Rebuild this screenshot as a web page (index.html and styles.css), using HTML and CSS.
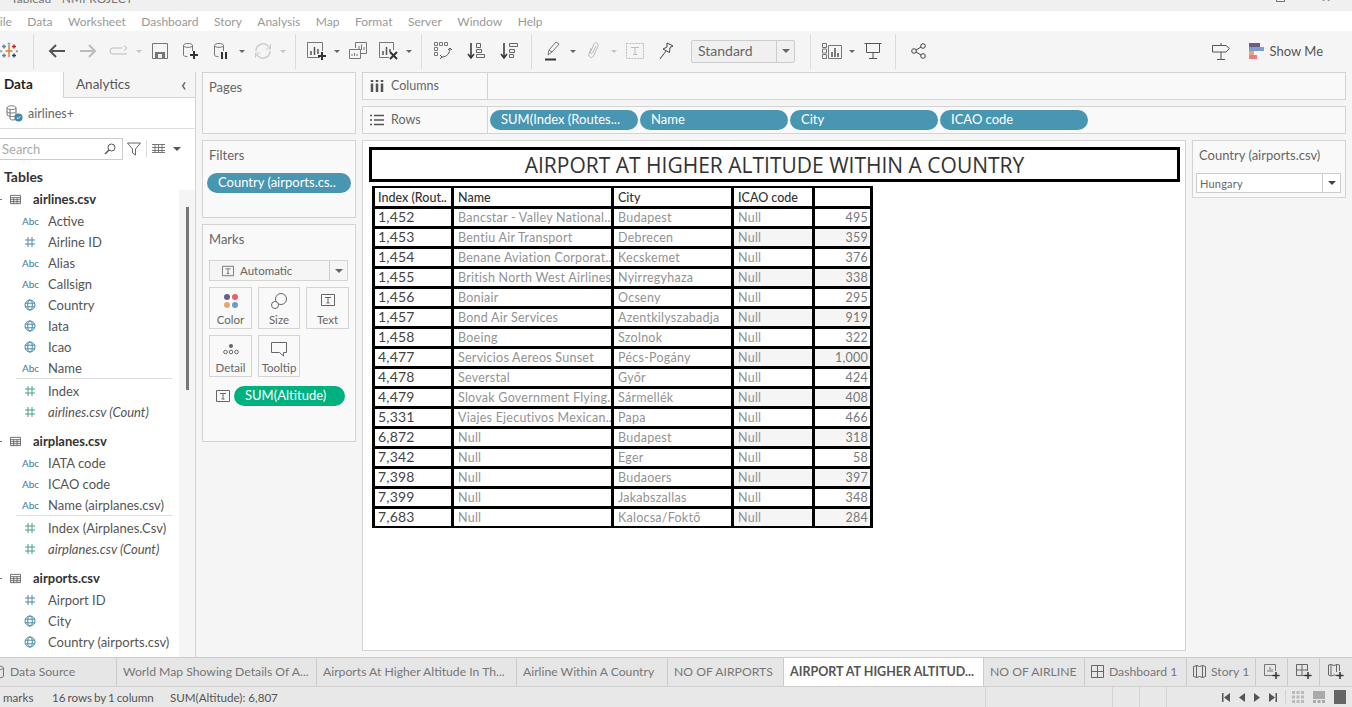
FILE: index.html
```html
<!DOCTYPE html>
<html>

<head>
    <meta charset="utf-8">
    <title>Tableau - NMPROJECT</title>
    <link rel="stylesheet" href="styles.css">
</head>

<body>
    <svg class="sprite">
        <symbol id="hash" viewBox="0 0 12 12"><path d="M4 1v10M8 1v10M1 4h10M1 8h10" fill="none" stroke="currentColor" /></symbol>
        <symbol id="globe" viewBox="0 0 12 12"><g fill="none" stroke="currentColor"><circle cx="6" cy="6" r="5" /><ellipse cx="6" cy="6" rx="2.3" ry="5" /><path d="M1 4.2h10M1 7.8h10" /></g></symbol>
        <symbol id="tbl" viewBox="0 0 12 12"><path d="M.5 1.5h11v9H.5zM.5 4h11M.5 6.2h11M.5 8.4h11M4 4v6.5M7.7 4v6.5" fill="none" stroke="#666" /></symbol>
        <symbol id="tbox" viewBox="0 0 14 14"><path d="M.5 1.5h13v11H.5z" fill="none" stroke="#666" /><path d="M4 4.5h6M7 4.5v5.5M5.5 10h3" fill="none" stroke="#666" /></symbol>
    </svg>

    <div class="titlebar">
        <span class="titlebar-text">Tableau - NMPROJECT</span>
        <span class="win-btn win-max"></span>
        <span class="win-x">&#10005;</span>
    </div>

    <div class="menubar">
        <span>File</span><span>Data</span><span>Worksheet</span><span>Dashboard</span><span>Story</span><span>Analysis</span><span>Map</span><span>Format</span><span>Server</span><span>Window</span><span>Help</span>
    </div>

    <div class="toolbar">
        <span class="tool logo">
            <svg width="18" height="18" viewBox="0 0 18 18" fill="none" stroke-width="1.4">
                <path d="M9 3v12M5.5 9h7" stroke="#e8762b" />
                <path d="M4 2.5v4M2 4.5h4" stroke="#5b879b" />
                <path d="M14 2.5v4M12 4.5h4" stroke="#c72035" />
                <path d="M4 11.5v4M2 13.500h4" stroke="#59879b" />
                <path d="M14 11.500v4M12 13.500h4" stroke="#1f447e" />
                <path d="M9 .5v2.500M7.700 1.700h2.600M1 8v2.500M.2 9.200h2M17 8v2.500M15.800 9.200h2" stroke="#7099a6" stroke-width="1" />
            </svg>
        </span>
        <span class="sep sep-first"></span>
        <div class="tools tools-first">
            <span class="tool"><svg width="20" height="16" viewBox="0 0 20 16"><path d="M18 8H3M9 2 3 8l6 6" fill="none" stroke="#555" stroke-width="2" /></svg></span>
            <span class="tool"><svg width="20" height="16" viewBox="0 0 20 16"><path d="M2 8h15M11 2l6 6-6 6" fill="none" stroke="#bbb" stroke-width="2" /></svg></span>
            <span class="tool"><svg width="20" height="12" viewBox="0 0 20 12"><path d="M13 3H4a2.500 2.500 0 0 0 0 6h14M15 .5 18 3l-3 2.500" fill="none" stroke="#bbb" /></svg></span>
            <span class="caret off"></span>
            <span class="tool"><svg width="16" height="16" viewBox="0 0 16 16"><path d="M.5.5h15v15H.5z" fill="none" stroke="#777" /><path d="M3 9h10v6H3z" fill="#777" /><path d="M6 11h4v4H6z" fill="#eee" /></svg></span>
            <span class="tool"><svg width="18" height="18" viewBox="0 0 18 18"><path d="M1.500 3.500C1.500 .8 10.500 .8 10.500 3.500V9M1.500 3.500c0 2.500 9 2.500 9 0M1.500 3.500V13c0 1 1.500 1.500 4 1.700" fill="none" stroke="#777" /><path d="M12 9v8M8 13h8" stroke="#333" stroke-width="2" /></svg></span>
            <span class="tool"><svg width="18" height="18" viewBox="0 0 18 18"><path d="M1.500 3.500C1.500 .8 10.500 .8 10.500 3.500V9M1.500 3.500c0 2.500 9 2.500 9 0M1.500 3.500V13c0 1 1.500 1.500 4 1.700" fill="none" stroke="#777" /><path d="M9 10v7M13 10v7" stroke="#333" stroke-width="2" /></svg></span>
            <span class="caret"></span>
            <span class="tool"><svg width="18" height="18" viewBox="0 0 18 18"><path d="M2 9a7 7 0 0 1 12-5l2 2M16 9a7 7 0 0 1-12 5l-2-2" fill="none" stroke="#ccc" stroke-width="1.500" /><path d="M16.500 2v5h-5M1.500 16v-5h5" fill="none" stroke="#ccc" /></svg></span>
            <span class="caret off"></span>
        </div>
        <span class="sep"></span>
        <div class="tools">
            <span class="tool"><svg width="20" height="18" viewBox="0 0 20 18"><path d="M13 15.500H.5V.5h15V9" fill="none" stroke="#777" /><path d="M4 9v4M7.500 5v8M11 7v5" stroke="#555" stroke-width="1.500" /><path d="M15 10v8M11 14h8" stroke="#333" stroke-width="2" /></svg></span>
            <span class="caret"></span>
            <span class="tool"><svg width="18" height="18" viewBox="0 0 18 18"><path d="M6.500 6V.5h11v11H12M.5 7.500h11v9H.5z" fill="none" stroke="#777" /><path d="M10 8V4M12.500 8V2.500M15 8V5M3 14v-2M5.500 14v-3M8 14v-2" stroke="#777" /></svg></span>
            <span class="tool"><svg width="20" height="18" viewBox="0 0 20 18"><path d="M10 15.500H.5V.5h14V8" fill="none" stroke="#777" /><path d="M4 9v4M7.500 5v8M11 7v3" stroke="#555" stroke-width="1.500" /><path d="m11 10 7 7M18 10l-7 7" stroke="#333" stroke-width="2" /></svg></span>
            <span class="caret"></span>
        </div>
        <span class="sep"></span>
        <div class="tools tools-spaced">
            <span class="tool"><svg width="18" height="18" viewBox="0 0 18 18"><path d="M.5.5h3v3h-3zM5.500.5h3v3h-3zM10.500.5h3v3h-3zM.5 5.500h3v3h-3zM.5 10.500h3v3h-3z" fill="none" stroke="#777" /><path d="M16 6c0 5-3 9-8 9M6 13l2 2-2 2M14 8l2-2 2 2" fill="none" stroke="#555" /></svg></span>
            <span class="tool"><svg width="18" height="18" viewBox="0 0 18 18"><path d="M4 1v14M1 12l3 4 3-4" fill="none" stroke="#333" stroke-width="1.500" /><path d="M9.500 1.500h4v4h-4zM9.500 7.500h5v3h-5zM9.500 12.500h8v3h-8z" fill="none" stroke="#666" /></svg></span>
            <span class="tool"><svg width="18" height="18" viewBox="0 0 18 18"><path d="M4 1v14M1 12l3 4 3-4" fill="none" stroke="#333" stroke-width="1.500" /><path d="M9.500 1.500h8v3h-8zM9.500 7.500h5v3h-5zM9.500 12.500h4v3h-4z" fill="none" stroke="#666" /></svg></span>
        </div>
        <span class="sep"></span>
        <div class="tools">
            <span class="tool"><svg width="18" height="20" viewBox="0 0 18 20"><path d="M4 14 5 9l7-8 3 2-7 8z M5 9l3 2" fill="none" stroke="#777" /><path d="M1 18.500h11" stroke="#333" stroke-width="2" /></svg></span>
            <span class="caret"></span>
            <span class="tool"><svg width="14" height="18" viewBox="0 0 14 18"><path d="M4 6 2 12c-1 3 3 5 4.500 2L11 4c1-3-3-4-4-2L3.500 10c-.5 1.500 1.500 2 2 1L9 4" fill="none" stroke="#bbb" /></svg></span>
            <span class="caret off"></span>
            <span class="tool"><svg width="18" height="16" viewBox="0 0 18 16"><path d="M.5.5h17v15H.5z" fill="none" stroke="#bbb" stroke-dasharray="2 1" /><path d="M5 4.500h8M9 4.500v7M7 11.500h4" fill="none" stroke="#bbb" /></svg></span>
            <span class="tool"><svg width="16" height="18" viewBox="0 0 16 18"><path d="m9 1 6 3-3 1.500-.5 5-6.500-3.500 4-2zM8 9l-6 8" fill="none" stroke="#444" /></svg></span>
        </div>
        <div class="fit-select"><span class="fit-label">Standard</span><span class="select-arrow"></span></div>
        <span class="sep"></span>
        <div class="tools">
            <span class="tool"><svg width="20" height="16" viewBox="0 0 20 16"><path d="M.5.5h4v4h-4zM.5 6h4v4h-4zM.5 11.500h4v4h-4zM6.500 2.500h13v13h-13z" fill="none" stroke="#777" /><path d="M10 14V9M13 14V5M16 14v-4" stroke="#555" stroke-width="1.500" /></svg></span>
            <span class="caret"></span>
            <span class="tool"><svg width="18" height="18" viewBox="0 0 18 18"><path d="M.5 1.500h17M2.500 1.500v9h13v-9M9 10.500v6M5 16.500h8" fill="none" stroke="#555" /></svg></span>
        </div>
        <span class="sep"></span>
        <div class="tools tools-last">
            <span class="tool"><svg width="16" height="16" viewBox="0 0 16 16"><g fill="none" stroke="#444"><circle cx="3" cy="8" r="2.300" /><circle cx="12" cy="3" r="2.300" /><circle cx="12" cy="13" r="2.300" /><path d="m5 7 5-3M5 9l5 3" /></g></svg></span>
        </div>
        <div class="toolbar-right">
            <span class="tool"><svg width="18" height="18" viewBox="0 0 18 18"><path d="M9 1v2M9 10v7M5 17.500h8M.5 3.500H14l3.500 3-3.500 3.500H.5z" fill="none" stroke="#555" /></svg></span>
            <span class="showme-bars"><i class="bar-a"></i><i class="bar-b"></i><i class="bar-c"></i><i class="bar-d"></i></span>
            <span class="showme-text">Show Me</span>
        </div>
    </div>

    <div class="main">
        <div class="data-pane">
            <div class="pane-tabs">
                <span class="pane-tab active">Data</span>
                <span class="pane-tab">Analytics</span>
                <span class="chevron">&#8249;</span>
            </div>
            <div class="source">
                <svg width="18" height="18" viewBox="0 0 18 18"><path d="M2 4c0-3 9-3 9 0v7c0 2-6 2-9 0zM2 4c0 2 9 2 9 0M2 7.500c0 2 9 2 9 0M5 6v9c2 1.500 4 1 5 .5" fill="none" stroke="#777" /><circle cx="13.500" cy="13.500" r="4" fill="#3f86a8" /><path d="m11.800 13.500 1.200 1.200 2.200-2.400" fill="none" stroke="#fff" /></svg>
                <span>airlines+</span>
            </div>
            <div class="search-row">
                <div class="search"><span>Search</span>
                    <svg width="12" height="12" viewBox="0 0 12 12"><circle cx="7.500" cy="4.500" r="3.500" fill="none" stroke="#555" /><path d="M5 7 1 11" stroke="#555" stroke-width="1.500" /></svg>
                </div>
                <svg class="search-filter" width="14" height="14" viewBox="0 0 14 14"><path d="M.5 1h13L8.500 7v6l-3-2V7z" fill="none" stroke="#666" /></svg>
                <span class="search-sep"></span>
                <svg width="13" height="9" viewBox="0 0 13 9"><path d="M0 .5h13M0 3.500h13M0 6.500h13M0 8.500h13M3 0v9M6.500 0v9M10 0v9" stroke="#777" fill="none" /></svg>
                <span class="caret dark"></span>
            </div>
            <div class="tables-head">Tables</div>
            <div class="tree">
                <div class="tree-list">
                    <div class="group first"><span class="twist"></span><svg class="tbl-icon"><use href="#tbl" /></svg>airlines.csv</div>
                    <div class="field"><span class="abc">Abc</span>Active</div>
                    <div class="field"><svg class="ficon dim"><use href="#hash" /></svg>Airline ID</div>
                    <div class="field"><span class="abc">Abc</span>Alias</div>
                    <div class="field"><span class="abc">Abc</span>Callsign</div>
                    <div class="field"><svg class="ficon dim"><use href="#globe" /></svg>Country</div>
                    <div class="field"><svg class="ficon dim"><use href="#globe" /></svg>Iata</div>
                    <div class="field"><svg class="ficon dim"><use href="#globe" /></svg>Icao</div>
                    <div class="field"><span class="abc">Abc</span>Name</div>
                    <div class="field-sep"></div>
                    <div class="field"><svg class="ficon mes"><use href="#hash" /></svg>Index</div>
                    <div class="field italic"><svg class="ficon mes"><use href="#hash" /></svg>airlines.csv (Count)</div>

                    <div class="group"><span class="twist"></span><svg class="tbl-icon"><use href="#tbl" /></svg>airplanes.csv</div>
                    <div class="field"><span class="abc">Abc</span>IATA code</div>
                    <div class="field"><span class="abc">Abc</span>ICAO code</div>
                    <div class="field"><span class="abc">Abc</span>Name (airplanes.csv)</div>
                    <div class="field-sep"></div>
                    <div class="field"><svg class="ficon mes"><use href="#hash" /></svg>Index (Airplanes.Csv)</div>
                    <div class="field italic"><svg class="ficon mes"><use href="#hash" /></svg>airplanes.csv (Count)</div>

                    <div class="group"><span class="twist"></span><svg class="tbl-icon"><use href="#tbl" /></svg>airports.csv</div>
                    <div class="field"><svg class="ficon dim"><use href="#hash" /></svg>Airport ID</div>
                    <div class="field"><svg class="ficon dim"><use href="#globe" /></svg>City</div>
                    <div class="field"><svg class="ficon dim"><use href="#globe" /></svg>Country (airports.csv)</div>
                </div>
                <div class="scroll"><div class="scroll-thumb"></div></div>
            </div>
        </div>

        <div class="cards">
            <div class="card card-pages"><div class="card-title">Pages</div></div>
            <div class="card card-filters">
                <div class="card-title">Filters</div>
                <div class="pill filter-pill">Country (airports.cs..</div>
            </div>
            <div class="card card-marks">
                <div class="card-title">Marks</div>
                <div class="mark-select">
                    <svg width="12" height="12"><use href="#tbox" /></svg>
                    <span class="mark-select-text">Automatic</span>
                    <span class="select-arrow"></span>
                </div>
                <div class="mark-grid">
                    <div class="mark-btn">
                        <svg width="16" height="16" viewBox="0 0 16 16"><circle cx="4" cy="4" r="3" fill="#6d5c8f" /><circle cx="12" cy="4" r="3" fill="#e9616f" /><circle cx="4" cy="12" r="3" fill="#e8a56f" /><circle cx="12" cy="12" r="3" fill="#6f9cc2" /></svg>
                        Color
                    </div>
                    <div class="mark-btn">
                        <svg width="16" height="16" viewBox="0 0 16 16"><circle cx="10" cy="6" r="5.500" fill="none" stroke="#666" /><circle cx="4" cy="12" r="3.500" fill="#fff" stroke="#666" /></svg>
                        Size
                    </div>
                    <div class="mark-btn">
                        <svg width="14" height="14"><use href="#tbox" /></svg>
                        Text
                    </div>
                    <div class="mark-btn">
                        <svg width="16" height="16" viewBox="0 0 16 16"><circle cx="8" cy="5" r="2" fill="#666" /><g fill="none" stroke="#666"><circle cx="2.500" cy="11" r="1.800" /><circle cx="8" cy="11" r="1.800" /><circle cx="13.500" cy="11" r="1.800" /></g></svg>
                        Detail
                    </div>
                    <div class="mark-btn">
                        <svg width="16" height="16" viewBox="0 0 16 16"><path d="M.5 1.500h15v10h-3V15l-4-3.500H.5z" fill="none" stroke="#666" /></svg>
                        Tooltip
                    </div>
                </div>
                <div class="mark-pill-row">
                    <svg width="14" height="14"><use href="#tbox" /></svg>
                    <div class="pill pill-green">SUM(Altitude)</div>
                </div>
            </div>
        </div>

        <div class="work">
            <div class="shelf">
                <div class="shelf-label">
                    <svg width="14" height="12" viewBox="0 0 14 12"><path d="M2 3.500v8.500M7 3.500v8.500M12 3.500v8.500M2 0v2M7 0v2M12 0v2" stroke="#555" stroke-width="2.500" /></svg>
                    Columns
                </div>
                <div class="shelf-body"></div>
            </div>
            <div class="shelf">
                <div class="shelf-label">
                    <svg width="14" height="12" viewBox="0 0 14 12"><path d="M0 1.500h2M4 1.500h10M0 6h2M4 6h10M0 10.500h2M4 10.500h10" stroke="#555" stroke-width="1.500" /></svg>
                    Rows
                </div>
                <div class="shelf-body">
                    <div class="pill">SUM(Index (Routes...</div>
                    <div class="pill">Name</div>
                    <div class="pill">City</div>
                    <div class="pill">ICAO code</div>
                </div>
            </div>
            <div class="work-bottom">
                <div class="view">
                    <div class="view-title">AIRPORT AT HIGHER ALTITUDE WITHIN A COUNTRY</div>
                    <div class="crosstab">
                        <div class="th first">Index (Rout..</div><div class="th">Name</div><div class="th">City</div><div class="th">ICAO code</div><div class="th"></div>

                        <div class="td key">1,452</div><div class="td">Bancstar - Valley National..</div><div class="td">Budapest</div><div class="td">Null</div><div class="td num">495</div>
                        <div class="td key">1,453</div><div class="td">Bentiu Air Transport</div><div class="td">Debrecen</div><div class="td alt">Null</div><div class="td num alt">359</div>
                        <div class="td key">1,454</div><div class="td">Benane Aviation Corporat..</div><div class="td">Kecskemet</div><div class="td">Null</div><div class="td num">376</div>
                        <div class="td key">1,455</div><div class="td">British North West Airlines</div><div class="td">Nyirregyhaza</div><div class="td alt">Null</div><div class="td num alt">338</div>
                        <div class="td key">1,456</div><div class="td">Boniair</div><div class="td">Ocseny</div><div class="td">Null</div><div class="td num">295</div>
                        <div class="td key">1,457</div><div class="td">Bond Air Services</div><div class="td">Azentkilyszabadja</div><div class="td alt">Null</div><div class="td num alt">919</div>
                        <div class="td key">1,458</div><div class="td">Boeing</div><div class="td">Szolnok</div><div class="td">Null</div><div class="td num">322</div>
                        <div class="td key">4,477</div><div class="td">Servicios Aereos Sunset</div><div class="td">Pécs-Pogány</div><div class="td alt">Null</div><div class="td num alt">1,000</div>
                        <div class="td key">4,478</div><div class="td">Severstal</div><div class="td">Győr</div><div class="td">Null</div><div class="td num">424</div>
                        <div class="td key">4,479</div><div class="td">Slovak Government Flying..</div><div class="td">Sármellék</div><div class="td alt">Null</div><div class="td num alt">408</div>
                        <div class="td key">5,331</div><div class="td">Viajes Ejecutivos Mexican..</div><div class="td">Papa</div><div class="td">Null</div><div class="td num">466</div>
                        <div class="td key">6,872</div><div class="td">Null</div><div class="td">Budapest</div><div class="td alt">Null</div><div class="td num alt">318</div>
                        <div class="td key">7,342</div><div class="td">Null</div><div class="td">Eger</div><div class="td">Null</div><div class="td num">58</div>
                        <div class="td key">7,398</div><div class="td">Null</div><div class="td">Budaoers</div><div class="td alt">Null</div><div class="td num alt">397</div>
                        <div class="td key">7,399</div><div class="td">Null</div><div class="td">Jakabszallas</div><div class="td">Null</div><div class="td num">348</div>
                        <div class="td key">7,683</div><div class="td">Null</div><div class="td">Kalocsa/Foktő</div><div class="td alt">Null</div><div class="td num alt">284</div>
                    </div>
                </div>
                <div class="legend">
                    <div class="legend-title">Country (airports.csv)</div>
                    <div class="legend-select"><span class="legend-value">Hungary</span><span class="select-arrow dark"></span></div>
                </div>
            </div>
        </div>
    </div>

    <div class="tabs">
        <div class="tab tab-source">
            <svg width="12" height="14" viewBox="0 0 12 14"><path d="M1.500 3c0-2.500 9-2.500 9 0v8c0 2.500-9 2.500-9 0zM1.500 3c0 2 9 2 9 0" fill="none" stroke="#777" /></svg>
            Data Source
        </div>
        <div class="tab tab-w200">World Map Showing Details Of A...</div>
        <div class="tab tab-w200">Airports At Higher Altitude In Th...</div>
        <div class="tab tab-airline">Airline Within A Country</div>
        <div class="tab tab-airports">NO OF AIRPORTS</div>
        <div class="tab tab-w200 tab-active">AIRPORT AT HIGHER ALTITUD...</div>
        <div class="tab tab-noair">NO OF AIRLINE</div>
        <div class="tab tab-dash">
            <svg width="13" height="13" viewBox="0 0 13 13"><path d="M.5.5h12v12H.5zM6.500.5v12M.5 6.500h12" fill="none" stroke="#666" /></svg>
            Dashboard 1
        </div>
        <div class="tab tab-story">
            <svg width="13" height="13" viewBox="0 0 13 13"><path d="M.5 1.500 3.500.5l3 1 3-1 3 1v10l-3 1-3-1-3 1-3-1zM3.500.5v12M9.500.5v12" fill="none" stroke="#666" /></svg>
            Story 1
        </div>
        <div class="tab tab-new">
            <svg width="16" height="16" viewBox="0 0 16 16"><path d="M9 11.500H.5V.5h11V7" fill="none" stroke="#777" /><path d="M4 8V6M6 8V3M8 8V5" stroke="#777" /><path d="M12 8v7M8.500 11.500h7" stroke="#333" stroke-width="1.500" /></svg>
        </div>
        <div class="tab tab-new">
            <svg width="16" height="16" viewBox="0 0 16 16"><path d="M9 11.500H.5V.5h11V7M6 .5v11M.5 6h11" fill="none" stroke="#666" /><path d="M12 8v7M8.500 11.500h7" stroke="#333" stroke-width="1.500" /></svg>
        </div>
        <div class="tab tab-new tab-end">
            <svg width="16" height="16" viewBox="0 0 16 16"><path d="M9 11.500 6 11l-3 1-2.500-1V1L3 .5l3 1L9 .5l2.500.5v6M3 .5v11M8.500 .5V8" fill="none" stroke="#666" /><path d="M12 8v7M8.500 11.500h7" stroke="#333" stroke-width="1.500" /></svg>
        </div>
    </div>

    <div class="status">
        <span class="status-marks">marks</span>
        <span class="status-rows">16 rows by 1 column</span>
        <span class="status-sum">SUM(Altitude): 6,807</span>
        <span class="status-cell cell-a"></span>
        <span class="status-cell cell-b"></span>
        <span class="status-cell cell-b"></span>
        <span class="status-cell cell-c"></span>
        <div class="nav">
            <svg width="8" height="9" viewBox="0 0 8 9"><path d="M0 0h1.500v9H0zM8 0v9L2 4.500z" fill="#555" /></svg>
            <svg width="6" height="9" viewBox="0 0 6 9"><path d="M6 0v9L0 4.500z" fill="#555" /></svg>
            <svg width="6" height="9" viewBox="0 0 6 9"><path d="M0 0v9l6-4.500z" fill="#555" /></svg>
            <svg width="8" height="9" viewBox="0 0 8 9"><path d="M8 0H6.500v9H8zM0 0v9l6-4.500z" fill="#555" /></svg>
        </div>
        <div class="views">
            <svg width="12" height="14" viewBox="0 0 12 14"><path d="M0 1h3v3H0zM4.500 1h3v3h-3zM9 1h3v3H9zM0 5.500h3v3H0zM4.500 5.500h3v3h-3zM9 5.500h3v3H9zM0 10h3v3H0zM4.500 10h3v3h-3zM9 10h3v3H9z" fill="#bbb" /></svg>
            <svg width="12" height="14" viewBox="0 0 12 14"><path d="M0 1h12v8H0zM0 10h3v3H0zM4.500 10h3v3h-3zM9 10h3v3H9z" fill="#aaa" /></svg>
            <svg width="12" height="14" viewBox="0 0 12 14"><path d="M0 0h12v14H0z" fill="#666" /></svg>
        </div>
    </div>
</body>

</html>
```

FILE: styles.css
```css
* {
    box-sizing: border-box;
}

html,
body {
    margin: 0;
    height: 100%;
    overflow: hidden;
}

body {
    display: flex;
    flex-direction: column;
    width: 1352px;
    height: 707px;
    background: #f5f5f5;
    color: #555;
    font-family: Lato, "Open Sans", sans-serif;
    font-size: 13px;
}

.sprite {
    display: none;
}

svg {
    flex: none;
}

/* window chrome */
.titlebar {
    position: relative;
    height: 11px;
    background: #f0f0f0;
    overflow: hidden;
}

.titlebar-text {
    display: block;
    margin: -9px 0 0 11px;
    font-size: 12px;
    line-height: 16px;
    color: #777;
}

.win-btn {
    position: absolute;
    left: 1276px;
    top: -7px;
    width: 9px;
    height: 9px;
    border: 1px solid #777;
}

.win-x {
    position: absolute;
    left: 1321px;
    top: -8px;
    font-size: 12px;
    line-height: 12px;
    color: #777;
}

.menubar {
    display: flex;
    gap: 15.500px;
    height: 20px;
    margin-left: -7px;
    background: #fff;
    color: #999;
    font-size: 12px;
    line-height: 21px;
}

/* toolbar */
.toolbar {
    display: flex;
    align-items: center;
    height: 41px;
    padding-bottom: 1px;
    background: #f5f5f5;
}

.tools {
    display: flex;
    align-items: center;
}

.tools-first {
    margin-left: 2px;
}

.tools-spaced {
    gap: 2px;
}

.tools-last {
    margin-left: 2px;
}

.tool {
    display: flex;
    flex: none;
    align-items: center;
    justify-content: center;
    width: 31px;
    height: 30px;
}

.logo {
    margin: 0 9px 0 -6px;
    width: 30px;
}

.caret {
    flex: none;
    width: 10px;
    height: 3px;
    display: flex;
    justify-content: center;
}

.caret::after {
    content: "";
    border-left: 3px solid transparent;
    border-right: 3px solid transparent;
    border-top: 3px solid #666;
}

.caret.off::after {
    border-top-color: #c4c4c4;
}

.caret.dark::after {
    border-left-width: 4px;
    border-right-width: 4px;
    border-top-width: 4px;
    border-top-color: #555;
}

.sep {
    flex: none;
    width: 1px;
    height: 35px;
    margin: 0 5px 0 7px;
    background: #dcdcdc;
}

.sep-first {
    margin-left: 0;
}

.fit-select {
    display: flex;
    align-items: center;
    width: 104px;
    height: 23px;
    margin: 0 8px 0 10px;
    border: 1px solid #ccc;
    border-radius: 2px;
    background: #f0f0f0;
}

.fit-label {
    flex: 1;
    padding: 0 0 1px 6px;
    font-size: 14px;
    color: #666;
}

.select-arrow {
    display: flex;
    flex: none;
    align-items: center;
    justify-content: center;
    width: 18px;
    height: 100%;
    border-left: 1px solid #ccc;
}

.select-arrow::after {
    content: "";
    border-left: 4px solid transparent;
    border-right: 4px solid transparent;
    border-top: 4px solid #666;
}

.select-arrow.dark::after {
    border-top-color: #444;
}

.toolbar-right {
    display: flex;
    align-items: center;
    margin-left: auto;
    padding-right: 29px;
}

.showme-bars {
    display: flex;
    flex-direction: column;
    width: 15px;
    margin: 0 6px 0 12px;
}

.showme-bars i {
    display: block;
    height: 3.5px;
    margin-bottom: .5px;
}

.bar-a {
    width: 11px;
    background: #6b5b86;
}

.bar-b {
    width: 15px;
    background: #7f9ccb;
}

.bar-c {
    width: 5px;
    background: #e8a67c;
}

.bar-d {
    width: 8px;
    background: #ee7a86;
}

.showme-text {
    font-size: 13px;
    color: #555;
}

/* main area */
.main {
    display: flex;
    height: 585px;
}

.data-pane {
    display: flex;
    flex: none;
    flex-direction: column;
    width: 196px;
    height: 100%;
    background: #fff;
    border-right: 1px solid #d4d4d4;
    overflow: hidden;
}

.pane-tabs {
    display: flex;
    flex: none;
    position: relative;
    height: 26px;
    background: #f5f5f5;
}

.pane-tab {
    padding: 4px 0 0 12px;
    flex: 1;
    font-size: 13.500px;
    color: #555;
    border-left: 1px solid #d4d4d4;
    border-bottom: 1px solid #d4d4d4;
}

.pane-tab.active {
    flex: none;
    width: 63px;
    padding-left: 4px;
    background: #fff;
    border: 0;
    color: #222;
    font-weight: 700;
}

.chevron {
    position: absolute;
    left: 181px;
    top: 0;
    font-size: 20px;
    line-height: 22px;
    color: #555;
}

.source {
    display: flex;
    flex: none;
    align-items: center;
    gap: 5px;
    height: 31px;
    padding-left: 5px;
    border-bottom: 1px solid #ddd;
    font-size: 12.500px;
    color: #666;
}

.search-row {
    display: flex;
    flex: none;
    align-items: center;
    height: 31px;
    padding-top: 8px;
    padding-right: 13px;
}

.search {
    display: flex;
    align-items: center;
    justify-content: space-between;
    width: 125px;
    height: 22px;
    margin-left: -2px;
    padding: 0 6px 0 3px;
    border: 1px solid #ccc;
    color: #aaa;
    font-size: 13px;
}

.search-filter {
    margin-left: 4px;
}

.search-sep {
    width: 1px;
    height: 17px;
    margin: 0 5px 0 5px;
    background: #ddd;
}

.search-row .caret {
    margin-left: 7px;
}

.tables-head {
    flex: none;
    height: 30px;
    padding: 8px 0 0 4px;
    font-size: 14px;
    font-weight: 700;
    color: #333;
}

.tree {
    display: flex;
    flex: 1;
    min-height: 0;
}

.tree-list {
    flex: none;
    width: 179px;
    overflow: hidden;
    font-size: 13px;
    color: #555;
}

.scroll {
    flex: 1;
    padding: 17px 0 0 7px;
    background: #f5f5f5;
}

.scroll-thumb {
    width: 3px;
    height: 183px;
    background: #777;
}

.group {
    display: flex;
    align-items: center;
    height: 21px;
    margin-top: 9px;
    padding-bottom: 1px;
    font-size: 13px;
    font-weight: 700;
    color: #333;
}

.group.first {
    height: 20px;
    margin-top: 0;
    padding-bottom: 2px;
}

.twist {
    width: 2px;
    height: 1px;
    margin-right: 8px;
    background: #777;
}

.tbl-icon {
    width: 11px;
    height: 11px;
    margin-right: 12px;
}

.field {
    display: flex;
    align-items: center;
    height: 21px;
    padding-left: 22px;
    white-space: nowrap;
}

.field.italic {
    font-style: italic;
}

.abc {
    flex: none;
    width: 26px;
    font-size: 10px;
    color: #3f7a99;
}

.ficon {
    width: 12px;
    height: 12px;
    margin: 0 12px 0 2px;
}

.ficon.dim {
    color: #4a8aa8;
}

.ficon.mes {
    color: #4a9c8c;
}

.field-sep {
    width: 156px;
    height: 1px;
    margin: 0 8px 1px 16px;
    background: #ddd;
}

/* pages, filters and marks */
.cards {
    display: flex;
    flex: none;
    flex-direction: column;
    gap: 6px;
    width: 154px;
    margin: 0 6px;
}

.card {
    background: #f9f9f9;
    border: 1px solid #d4d4d4;
}

.card-pages {
    height: 62px;
}

.card-filters {
    height: 78px;
}

.card-marks {
    height: 218px;
}

.card-title {
    padding: 6px 0 0 6px;
    font-size: 13px;
    color: #666;
    line-height: 16px;
}

.pill {
    flex: none;
    width: 148px;
    height: 20px;
    padding-left: 11px;
    border-radius: 10px;
    background: #4996b2;
    color: #fff;
    font-size: 13px;
    line-height: 19px;
    white-space: nowrap;
    overflow: hidden;
}

.filter-pill {
    width: 144px;
    margin: 10px 0 0 4px;
}

.mark-select {
    display: flex;
    align-items: center;
    height: 21px;
    margin: 13px 7px 0 6px;
    padding-left: 12px;
    border: 1px solid #d4d4d4;
    background: #f5f5f5;
    font-size: 11.500px;
    color: #666;
}

.mark-select-text {
    flex: 1;
    padding-left: 6px;
}

.mark-grid {
    display: grid;
    grid-template-columns: 43px 42px 43px;
    grid-auto-rows: 42px;
    gap: 6px;
    margin: 6px 0 0 6px;
}

.mark-btn {
    display: flex;
    flex-direction: column;
    align-items: center;
    justify-content: space-between;
    padding: 5px 0 2px;
    border: 1px solid #d4d4d4;
    background: #f9f9f9;
    font-size: 11.500px;
    color: #666;
}

.mark-pill-row {
    display: flex;
    align-items: center;
    gap: 4px;
    margin: 9px 0 0 13px;
}

.pill-green {
    width: 111px;
    background: #00b180;
    text-align: left;
}

/* shelves and view */
.work {
    display: flex;
    flex: 1;
    flex-direction: column;
    gap: 6px;
    min-width: 0;
    padding-right: 6px;
    height: 579px;
}

.shelf {
    display: flex;
    flex: none;
    height: 28px;
    background: #f9f9f9;
    border: 1px solid #d4d4d4;
}

.shelf-label {
    display: flex;
    align-items: center;
    gap: 7px;
    width: 125px;
    padding: 0 0 1px 7px;
    border-right: 1px solid #d4d4d4;
    font-size: 12.500px;
    color: #666;
}

.shelf-body {
    display: flex;
    align-items: center;
    gap: 2px;
    padding-left: 2px;
}

.work-bottom {
    display: flex;
    flex: 1;
    gap: 6px;
    min-height: 0;
}

.view {
    flex: none;
    width: 824px;
    padding: 6px 5px 0 6px;
    background: #fff;
    border: 1px solid #d4d4d4;
}

.view-title {
    height: 35px;
    border: 3px solid #000;
    color: #333;
    font-family: "Open Sans", sans-serif;
    font-size: 21px;
    line-height: 30px;
    text-align: center;
}

.crosstab {
    display: grid;
    grid-template-columns: 76px 157px 117px 78px 55px;
    grid-template-rows: 18px repeat(16, 17px);
    gap: 3px;
    width: 501px;
    margin: 4px 0 0 3px;
    padding: 2px 3px;
    background: #000;
    font-size: 12.500px;
    line-height: 17px;
}

.th {
    padding-left: 4px;
    background: #fff;
    color: #333;
    font-weight: 500;
    line-height: 20px;
    white-space: nowrap;
    overflow: hidden;
}

.th.first {
    padding-left: 3px;
}

.td {
    padding-left: 4px;
    background: #fff;
    color: #939393;
    letter-spacing: .25px;
    white-space: nowrap;
    overflow: hidden;
}

.td.key {
    padding-left: 3px;
    color: #444;
    font-size: 14px;
    line-height: 16px;
    letter-spacing: .2px;
}

.td.num {
    padding: 0 2px 0 0;
    color: #777;
    text-align: right;
}

.td.alt {
    background: #f5f5f5;
}

.legend {
    flex: none;
    width: 154px;
    height: 58px;
    background: #f9f9f9;
    border: 1px solid #d4d4d4;
}

.legend-title {
    padding: 6px 0 0 6px;
    font-size: 13px;
    line-height: 16px;
    color: #666;
}

.legend-select {
    display: flex;
    align-items: center;
    height: 20px;
    margin: 10px 4px 0 3px;
    border: 1px solid #ccc;
    background: #fff;
}

.legend-value {
    flex: 1;
    padding-left: 3px;
    font-size: 11px;
    letter-spacing: .2px;
    color: #666;
}

/* sheet tabs */
.tabs {
    display: flex;
    flex: none;
    height: 30px;
    background: #e6e6e6;
    border-top: 1px solid #ccc;
    border-bottom: 1px solid #d0d0d0;
}

.tab {
    display: flex;
    flex: none;
    align-items: center;
    gap: 5px;
    padding: 0 0 1px 6px;
    border-right: 1px solid #ccc;
    font-size: 12.200px;
    color: #777;
    white-space: nowrap;
}

.tab-source {
    width: 124px;
    margin-left: -7px;
    padding-left: 0;
}

.tab-w200 {
    width: 200px;
}

.tab-airline {
    width: 151px;
}

.tab-airports {
    width: 116px;
}

.tab-active {
    background: #fff;
    color: #555;
    font-size: 12.500px;
    font-weight: 700;
}

.tab-noair {
    width: 101px;
}

.tab-dash {
    width: 102px;
}

.tab-story {
    width: 69px;
}

.tab-new {
    justify-content: center;
    width: 32px;
    padding: 0;
}

.tab-end {
    border-right: 0;
}

/* status bar */
.status {
    display: flex;
    flex: 1;
    align-items: center;
    background: #e8e8e8;
    font-size: 11.600px;
    color: #555;
}

.status-marks {
    margin-left: 3px;
    width: 49px;
}

.status-rows {
    width: 118px;
    word-spacing: -1px;
}

.status-sum {
    width: 815px;
}

.status-cell {
    align-self: stretch;
    border-left: 1px solid #d4d4d4;
}

.cell-a {
    width: 127px;
}

.cell-b {
    width: 27px;
}

.cell-c {
    width: 56px;
}

.nav {
    display: flex;
    align-items: center;
    gap: 9px;
    width: 64px;
    height: 14px;
    border-right: 1px solid #d4d4d4;
}

.views {
    display: flex;
    align-items: center;
    gap: 9px;
    margin-left: 6px;
}
```
